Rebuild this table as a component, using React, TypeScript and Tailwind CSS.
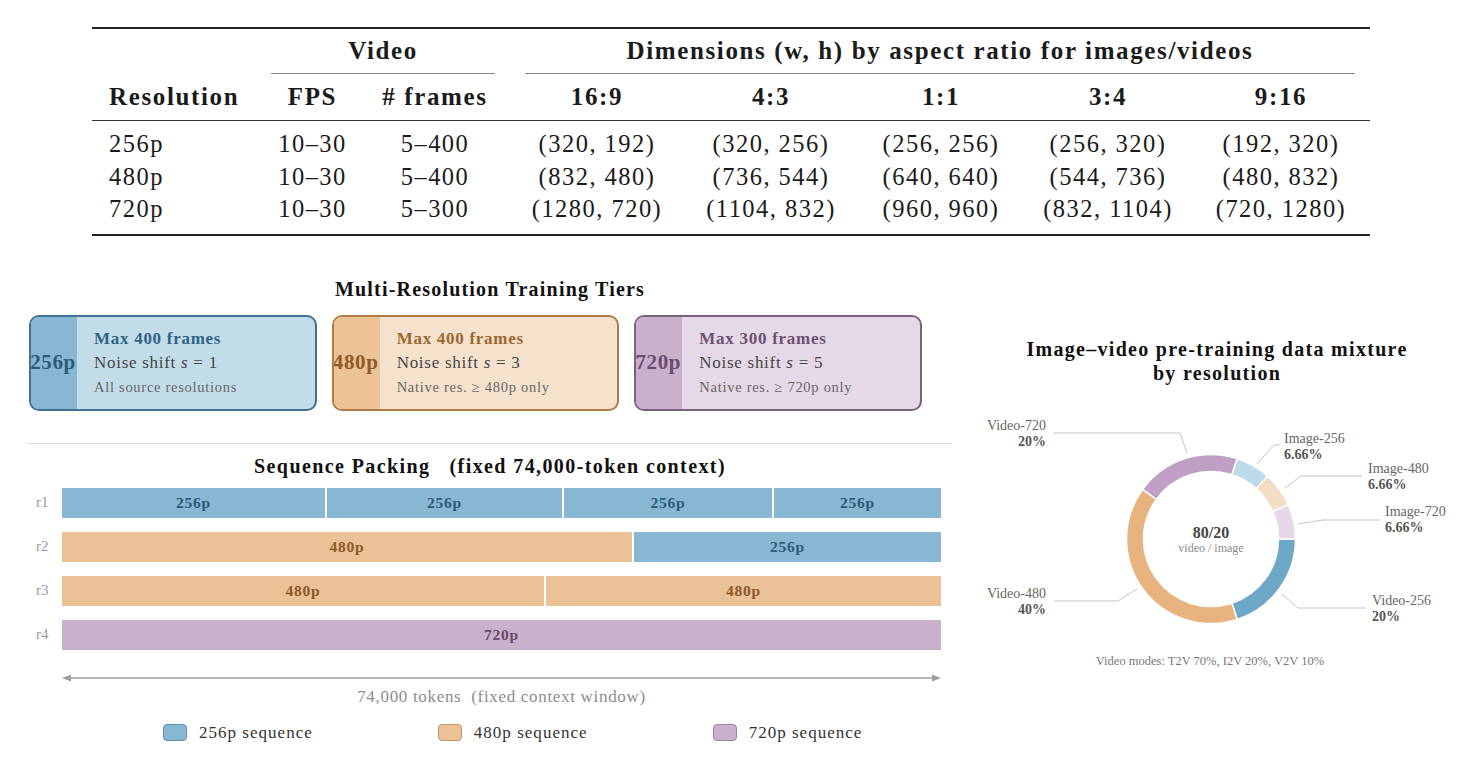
import React from 'react';

const serif = "font-['Liberation_Serif',serif]";

const rows = [
    { res: '256p', fps: '10–30', frames: '5–400', dims: ['(320, 192)', '(320, 256)', '(256, 256)', '(256, 320)', '(192, 320)'] },
    { res: '480p', fps: '10–30', frames: '5–400', dims: ['(832, 480)', '(736, 544)', '(640, 640)', '(544, 736)', '(480, 832)'] },
    { res: '720p', fps: '10–30', frames: '5–300', dims: ['(1280, 720)', '(1104, 832)', '(960, 960)', '(832, 1104)', '(720, 1280)'] },
];

const cols = 'grid grid-cols-[173px_95px_150px_174px_174px_166px_168px_178px]';

const tiers = [
    {
        res: '256p', max: 'Max 400 frames', s: '1', note: 'All source resolutions',
        box: 'border-[#3f7091] bg-[#c3dcea]', strip: 'bg-[#87b7d2] text-[#2d5c79]', title: 'text-[#2f6485]',
    },
    {
        res: '480p', max: 'Max 400 frames', s: '3', note: 'Native res. ≥ 480p only',
        box: 'border-[#b17b46] bg-[#f6e1cd]', strip: 'bg-[#ecc297] text-[#8f5b27]', title: 'text-[#9c662f]',
    },
    {
        res: '720p', max: 'Max 300 frames', s: '5', note: 'Native res. ≥ 720p only',
        box: 'border-[#7b617f] bg-[#e5d8e7]', strip: 'bg-[#c9b1cc] text-[#6a4c70]', title: 'text-[#6d5072]',
    },
];

const blue = 'bg-[#87b7d2] text-[#2d5c79]';
const orange = 'bg-[#ebc197] text-[#8c5a28]';
const purple = 'bg-[#c9b1cc] text-[#694c6f]';

const packing = [
    { label: 'r1', segs: [{ t: '256p', c: blue, g: 'grow-[263]' }, { t: '256p', c: blue, g: 'grow-[235]' }, { t: '256p', c: blue, g: 'grow-[208]' }, { t: '256p', c: blue, g: 'grow-[167]' }] },
    { label: 'r2', segs: [{ t: '480p', c: orange, g: 'grow-[570]' }, { t: '256p', c: blue, g: 'grow-[307]' }] },
    { label: 'r3', segs: [{ t: '480p', c: orange, g: 'grow-[482]' }, { t: '480p', c: orange, g: 'grow-[395]' }] },
    { label: 'r4', segs: [{ t: '720p', c: purple, g: 'grow-[879]' }] },
];

const legend = [
    { t: '256p sequence', c: 'bg-[#87b7d2] border-[#5f8fab]' },
    { t: '480p sequence', c: 'bg-[#ebc197] border-[#c0956a]' },
    { t: '720p sequence', c: 'bg-[#c9b1cc] border-[#9c839f]' },
];

// donut geometry, in page coordinates
const CX = 1211;
const CY = 538;
const sector = (a0: number, a1: number, r0: number, r1: number) => {
    const p = (a: number, r: number) => [CX + r * Math.cos((a * Math.PI) / 180), CY + r * Math.sin((a * Math.PI) / 180)];
    const large = a1 - a0 > 180 ? 1 : 0;
    const [x0, y0] = p(a0, r1);
    const [x1, y1] = p(a1, r1);
    const [x2, y2] = p(a1, r0);
    const [x3, y3] = p(a0, r0);
    return `M${x0} ${y0} A${r1} ${r1} 0 ${large} 1 ${x1} ${y1} L${x2} ${y2} A${r0} ${r0} 0 ${large} 0 ${x3} ${y3}Z`;
};

const slices = [
    { a0: 0, a1: 72, fill: '#6da8c8' },
    { a0: 72, a1: 216, fill: '#e8b37e' },
    { a0: 216, a1: 288, fill: '#bfa0c4' },
    { a0: 288, a1: 312, fill: '#bddbea' },
    { a0: 312, a1: 336, fill: '#f5dcc4' },
    { a0: 336, a1: 360, fill: '#e5d6e8' },
];

const labels = [
    { name: 'Video-720', pct: '20%', x: 1046, y: 429, end: true, line: '1053,432 1180,432 1187,452' },
    { name: 'Image-256', pct: '6.66%', x: 1284, y: 442, end: false, line: '1257,463 1274,444 1280,444' },
    { name: 'Image-480', pct: '6.66%', x: 1368, y: 472, end: false, line: '1285,487 1301,475 1362,475' },
    { name: 'Image-720', pct: '6.66%', x: 1385, y: 515, end: false, line: '1298,523 1323,519 1380,519' },
    { name: 'Video-256', pct: '20%', x: 1372, y: 604, end: false, line: '1282,593 1298,607 1366,607' },
    { name: 'Video-480', pct: '40%', x: 1046, y: 597, end: true, line: '1054,600 1118,600 1137,588' },
];

function Donut() {
    return (
        <svg width="510" height="285" viewBox="962 400 510 285" className="block">
            {slices.map((s, i) => (
                <path key={i} d={sector(s.a0, s.a1, 67.5, 84.5)} fill={s.fill} stroke="#ffffff" strokeWidth="1.5" />
            ))}
            {labels.map((l) => (
                <g key={l.name} fontFamily="Liberation Serif, serif">
                    <polyline points={l.line} fill="none" stroke="#c4c4c4" strokeWidth="1" />
                    <text x={l.x} y={l.y} fontSize="14" fill="#666666" textAnchor={l.end ? 'end' : 'start'}>{l.name}</text>
                    <text x={l.x} y={l.y + 16} fontSize="14" fontWeight="bold" fill="#555555" textAnchor={l.end ? 'end' : 'start'}>{l.pct}</text>
                </g>
            ))}
            <text x={CX} y={537} fontSize="16" fontWeight="bold" fill="#444444" textAnchor="middle" fontFamily="Liberation Serif, serif">80/20</text>
            <text x={CX} y={551} fontSize="12" fill="#8a8a8a" textAnchor="middle" fontFamily="Liberation Serif, serif">video / image</text>
            <text x={1210} y={664} fontSize="12.5" fill="#777777" textAnchor="middle" fontFamily="Liberation Serif, serif">Video modes: T2V 70%, I2V 20%, V2V 10%</text>
        </svg>
    );
}

export default function App() {
    return (
        <div className={`w-[1477px] h-[775px] bg-white text-[#1b1b1b] overflow-hidden ${serif}`}>
            {/* Resolution table */}
            <div className="ml-[92px] w-[1278px] pt-[27px]">
                <div className="border-t-2 border-[#222]">
                    <div className={`${cols} h-[45px] text-[25px] font-bold tracking-[0.065em]`}>
                        <div />
                        <div className="col-span-2 ml-[6px] mr-[15px] border-b border-[#8a8a8a] pt-[7px] leading-[30px] text-center">Video</div>
                        <div className="col-span-5 mx-[15px] border-b border-[#8a8a8a] pt-[7px] leading-[30px] text-center">Dimensions (w, h) by aspect ratio for images/videos</div>
                    </div>
                    <div className={`${cols} h-[47px] pt-[8px] text-[25px] font-bold tracking-[0.065em] leading-[30px] border-b-[1.5px] border-[#333]`}>
                        <div className="pl-[17px]">Resolution</div>
                        <div className="text-center">FPS</div>
                        <div className="text-center"># frames</div>
                        <div className="text-center">16:9</div>
                        <div className="text-center">4:3</div>
                        <div className="text-center">1:1</div>
                        <div className="text-center">3:4</div>
                        <div className="text-center">9:16</div>
                    </div>
                    <div className="pt-[7px] pb-[8px] border-b-2 border-[#222] text-[24.5px] tracking-[0.06em]">
                        {rows.map((r) => (
                            <div key={r.res} className={`${cols} h-[32.5px] leading-[32px]`}>
                                <div className="pl-[17px]">{r.res}</div>
                                <div className="text-center">{r.fps}</div>
                                <div className="text-center">{r.frames}</div>
                                {r.dims.map((d) => (
                                    <div key={d} className="text-center">{d}</div>
                                ))}
                            </div>
                        ))}
                    </div>
                </div>
            </div>

            <div className="flex items-start">
                {/* Left panel: tiers + packing */}
                <div className="ml-[28px] w-[924px] pt-[41px]">
                    <h3 className="text-center text-[20px] font-bold tracking-[0.06em] leading-[24px] text-[#111]">Multi-Resolution Training Tiers</h3>
                    <div className="mt-[14px] ml-[1px] w-[893px] grid grid-cols-3 gap-[15px]">
                        {tiers.map((t) => (
                            <div key={t.res} className={`h-[96px] flex rounded-[10px] border-2 overflow-hidden ${t.box}`}>
                                <div className={`w-[46px] shrink-0 flex items-center justify-center text-[21px] font-bold tracking-[0.03em] ${t.strip}`}>
                                    <span className="-ml-[2px]">{t.res}</span>
                                </div>
                                <div className="pl-[17px] flex flex-col justify-center leading-[24px] tracking-[0.045em]">
                                    <div className={`text-[17px] font-bold ${t.title}`}>{t.max}</div>
                                    <div className="text-[17px] text-[#444]">
                                        Noise shift <i>s</i> = {t.s}
                                    </div>
                                    <div className="text-[14.5px] text-[#666]">{t.note}</div>
                                </div>
                            </div>
                        ))}
                    </div>

                    <div className="mt-[32px] h-px bg-[#dcdcdc]" />

                    <h3 className="mt-[10px] text-center text-[20px] font-bold tracking-[0.07em] leading-[24px] text-[#111] whitespace-pre">Sequence Packing   (fixed 74,000-token context)</h3>

                    <div className="mt-[10px] pr-[11px] flex flex-col gap-[14px]">
                        {packing.map((row) => (
                            <div key={row.label} className="flex items-center">
                                <div className="w-[34px] pl-[8px] text-[15px] text-[#9a9a9a]">{row.label}</div>
                                <div className="flex-1 h-[30px] flex gap-[2px]">
                                    {row.segs.map((s, i) => (
                                        <div key={i} className={`basis-0 ${s.g} flex items-center justify-center text-[15.5px] font-bold tracking-[0.05em] ${s.c}`}>{s.t}</div>
                                    ))}
                                </div>
                            </div>
                        ))}
                    </div>

                    <div className="mt-[22px] ml-[34px] mr-[11px]">
                        <svg width="879" height="12" viewBox="0 0 879 12" className="block">
                            <line x1="6" y1="6" x2="873" y2="6" stroke="#9d9d9d" strokeWidth="1.5" />
                            <polygon points="0,6 9,2.5 9,9.5" fill="#9d9d9d" />
                            <polygon points="879,6 870,2.5 870,9.5" fill="#9d9d9d" />
                        </svg>
                        <div className="mt-[3px] text-center text-[17px] tracking-[0.04em] leading-[20px] text-[#8c8c8c] whitespace-pre">74,000 tokens  (fixed context window)</div>
                    </div>

                    <div className="mt-[16px] pl-[135px] flex gap-[125px]">
                        {legend.map((l) => (
                            <div key={l.t} className="flex items-center gap-[12px]">
                                <div className={`w-[24px] h-[17px] rounded-[4px] border ${l.c}`} />
                                <span className="text-[17px] tracking-[0.06em] leading-[20px] text-[#333]">{l.t}</span>
                            </div>
                        ))}
                    </div>
                </div>

                {/* Right panel: data mixture donut */}
                <div className="flex-1 pt-[101px]">
                    <h3 className="pl-[5px] text-center text-[20px] font-bold tracking-[0.065em] leading-[24px] text-[#111]">
                        Image–video pre-training data mixture
                        <br />
                        by resolution
                    </h3>
                    <div className="mt-[16px] ml-[10px]">
                        <Donut />
                    </div>
                </div>
            </div>
        </div>
    );
}
